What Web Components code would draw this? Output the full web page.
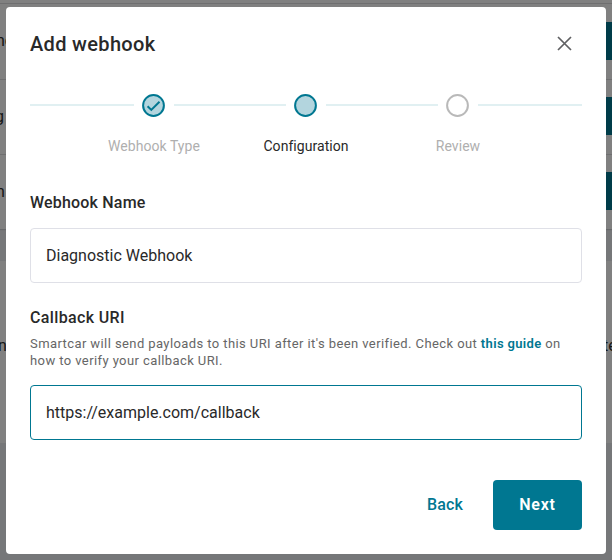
<!DOCTYPE html>
<html lang="en">
<head>
<meta charset="utf-8">
<title>Add webhook</title>
<style>
* {
  box-sizing: border-box;
}

html,
body {
  margin: 0;
  height: 100%;
  overflow: hidden;
}

body {
  --color-primary: #007791;
  --color-primary-light: #b3d5de;
  --color-track: #e1f0f2;
  --color-text: #292929;
  --color-muted: #afafaf;
  --color-border: #dfe0e7;
  font-family: Roboto, "Liberation Sans", sans-serif;
  font-size: 16px;
  line-height: 20px;
  color: var(--color-text);
  background: #767779;
}
</style>
</head>
<body>
<dashboard-page></dashboard-page>

<modal-dialog heading="Add webhook">
  <step-progress>
    <step-item state="done">Webhook Type</step-item>
    <step-item state="current">Configuration</step-item>
    <step-item>Review</step-item>
  </step-progress>

  <form-field label="Webhook Name" value="Diagnostic Webhook"></form-field>

  <form-field label="Callback URI" value="https://example.com/callback" active>
    <span slot="help">Smartcar will send payloads to this URI after it's been verified. Check out <text-link>this guide</text-link> on how to verify your callback URI.</span>
  </form-field>

  <action-button slot="actions" variant="text">Back</action-button>
  <action-button slot="actions">Next</action-button>
</modal-dialog>

<script>
// Creates the shadow DOM and fills it with the given markup
const attachTemplate = (element, html) => {
  const template = document.createElement('template');
  template.innerHTML = `<style>* { box-sizing: border-box; }</style>${html}`;
  const shadow = element.attachShadow({ mode: 'open' });
  shadow.append(template.content.cloneNode(true));
  return shadow;
};

// The page behind the dialog, only its edges are visible
class DashboardPage extends HTMLElement {
  constructor() {
    super();
    attachTemplate(this, `
<style>
:host {
  display: flex;
  flex-direction: column;
  gap: 32px;
  height: 443px;
  overflow: hidden;
  color: #151515;
}

.table,
.panel {
  background: #808080;
  box-shadow: 0 1px 1px rgba(0, 0, 0, 0.12);
}

.table {
  padding-top: 3px;
}

.row {
  display: flex;
  align-items: flex-start;
  justify-content: space-between;
  height: 75px;
  padding-top: 17px;
  border-top: 1px solid #6f6f70;
  white-space: nowrap;
}

.row:first-child {
  height: 76px;
  padding-top: 18px;
}

.name {
  margin: 10px 0 0 -4px;
}

.row:first-child .name {
  margin-top: 9px;
}

.row:nth-child(2) .name {
  margin-left: -5px;
}

.button {
  width: 6px;
  height: 38px;
  background: #003c49;
}

.panel {
  display: flex;
  flex: 1;
  justify-content: space-between;
  padding-top: 75px;
}

.panel .name {
  margin: 0 0 0 -2px;
}

.end {
  width: 9px;
  white-space: nowrap;
}
</style>
<div class="table">
  <div class="row"><span class="name">ne</span><span class="button"></span></div>
  <div class="row"><span class="name">g</span><span class="button"></span></div>
  <div class="row"><span class="name">n</span><span class="button"></span></div>
</div>
<div class="panel"><span class="name">n</span><span class="end">te</span></div>`);
  }
}

class ModalDialog extends HTMLElement {
  constructor() {
    super();
    this.shadow = attachTemplate(this, `
<style>
:host {
  position: fixed;
  inset: 0;
  display: flex;
  align-items: flex-start;
  justify-content: center;
  padding-top: 7px;
}

.dialog {
  display: flex;
  flex-direction: column;
  width: 600px;
  height: 547px;
  padding: 24px;
  border-radius: 4px;
  background: #fff;
}

header {
  display: flex;
  align-items: center;
  justify-content: space-between;
  height: 26px;
}

h2 {
  margin: 0;
  font-size: 20px;
  font-weight: 500;
  line-height: 26px;
  letter-spacing: 0.33px;
}

button {
  display: flex;
  padding: 0 10px 2px 0;
  border: 0;
  background: none;
}

footer {
  display: flex;
  justify-content: flex-end;
  margin-top: auto;
}
</style>
<section class="dialog">
  <header>
    <h2></h2>
    <button aria-label="Close">
      <svg width="15" height="15" viewBox="0 0 15 15" fill="none" stroke="#5f6062" stroke-width="1.7">
        <path d="M1 1l13 13M14 1L1 14"/>
      </svg>
    </button>
  </header>
  <slot></slot>
  <footer><slot name="actions"></slot></footer>
</section>`);
  }

  connectedCallback() {
    this.shadow.querySelector('h2').textContent = this.getAttribute('heading');
  }
}

class StepProgress extends HTMLElement {
  constructor() {
    super();
    attachTemplate(this, `
<style>
:host {
  display: flex;
  margin-top: 37px;
}

/* the last stretch of track, after the final step */
.tail {
  flex: none;
  width: 104px;
  height: 2px;
  margin-top: 10px;
  background: var(--color-track);
}
</style>
<slot></slot>
<div class="tail"></div>`);
  }
}

class StepItem extends HTMLElement {
  constructor() {
    super();
    attachTemplate(this, `
<style>
:host {
  display: flex;
  flex: none;
  color: var(--color-muted);
}

:host([state="current"]) {
  color: var(--color-text);
}

.track {
  width: 112px;
  height: 2px;
  margin-top: 10px;
  background: var(--color-track);
}

:host(:first-child) .track {
  width: 104px;
}

.node {
  display: flex;
  flex-direction: column;
  align-items: center;
  gap: 19px;
  width: 40px;
}

svg {
  display: block;
  margin-right: 1px;
  fill: none;
  stroke: #b9b9b9;
  stroke-width: 2;
}

:host([state]) svg {
  stroke: var(--color-primary);
}

:host([state]) circle {
  fill: var(--color-primary-light);
}

path {
  display: none;
}

:host([state="done"]) path {
  display: block;
}

.label {
  font-size: 14px;
  line-height: 20px;
  letter-spacing: 0.05px;
  white-space: nowrap;
}
</style>
<div class="track"></div>
<div class="node">
  <svg width="23" height="23" viewBox="0 0 23 23">
    <circle cx="11.5" cy="11.5" r="10.4"/>
    <path d="M5.6 12.2l3.7 3.7 8.2-8.2"/>
  </svg>
  <span class="label"><slot></slot></span>
</div>`);
  }
}

class FormField extends HTMLElement {
  constructor() {
    super();
    this.shadow = attachTemplate(this, `
<style>
:host {
  display: flex;
  flex-direction: column;
  margin-top: 37px;
}

:host([active]) {
  margin-top: 25px;
}

label {
  font-weight: 500;
  letter-spacing: 0.19px;
}

:host([active]) label {
  letter-spacing: 0.36px;
}

.help {
  margin-top: 7px;
  font-size: 13px;
  line-height: 17px;
  letter-spacing: 0.41px;
  color: #666;
}

:host(:not([active])) .help {
  display: none;
}

input {
  width: 100%;
  height: 55px;
  margin-top: 15px;
  padding: 0 15px;
  border: 1px solid var(--color-border);
  border-radius: 4px;
  outline: 0;
  background: #fff;
  color: inherit;
  font: inherit;
}

:host([active]) input {
  margin-top: 16px;
  border-color: var(--color-primary);
}
</style>
<label for="input"></label>
<div class="help"><slot name="help"></slot></div>
<input id="input" type="text">`);
  }

  connectedCallback() {
    this.shadow.querySelector('label').textContent = this.getAttribute('label');
    this.shadow.querySelector('input').value = this.getAttribute('value');
  }
}

class TextLink extends HTMLElement {
  constructor() {
    super();
    attachTemplate(this, `
<style>
:host {
  font-weight: 600;
  letter-spacing: 0.35px;
  color: var(--color-primary);
}
</style>
<slot></slot>`);
  }
}

class ActionButton extends HTMLElement {
  constructor() {
    super();
    attachTemplate(this, `
<style>
:host {
  display: block;
}

button {
  display: block;
  width: 89px;
  height: 50px;
  padding: 0;
  border: 0;
  border-radius: 4px;
  background: var(--color-primary);
  color: #fff;
  font: inherit;
  font-weight: 600;
  letter-spacing: 0.8px;
}

:host([variant="text"]) button {
  width: 96px;
  background: none;
  color: var(--color-primary);
  font-weight: 500;
  letter-spacing: 0.2px;
}
</style>
<button><slot></slot></button>`);
  }
}

customElements.define('dashboard-page', DashboardPage);
customElements.define('modal-dialog', ModalDialog);
customElements.define('step-progress', StepProgress);
customElements.define('step-item', StepItem);
customElements.define('form-field', FormField);
customElements.define('text-link', TextLink);
customElements.define('action-button', ActionButton);
</script>
</body>
</html>
